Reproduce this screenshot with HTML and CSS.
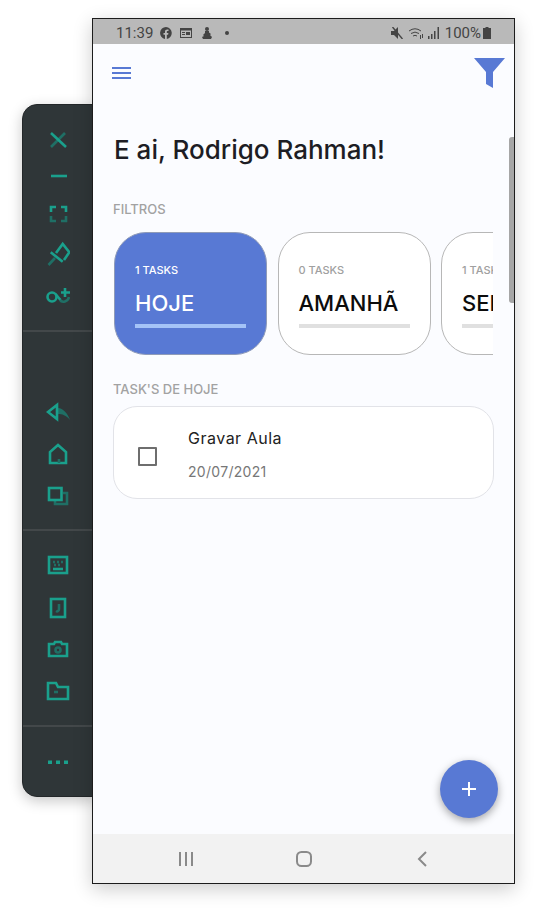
FILE: index.html
```html
<!doctype html>
<html lang="en">
	<head>
		<title>Tasks</title>
		<meta charset="utf-8" />
		<link rel="stylesheet" href="styles.css">
	</head>

	<body>

		<!-- emulator side toolbar -->
		<div class="toolbar">
			<div class="tool-group group-window">
				<svg class="tool" viewBox="0 0 24 24"><path class="dim" d="M19 5 5 19"/><path class="lit" d="M5 5l15 14"/></svg>
				<svg class="tool" viewBox="0 0 24 24"><path class="lit" d="M5 11h16"/></svg>
				<svg class="tool" viewBox="0 0 24 24"><path class="lit" d="M10 5H5v5M15 5h5v5"/><path class="dim" d="M5 14v5h5M15 19h5v-5"/></svg>
				<svg class="tool tool-wide" viewBox="0 0 24 24"><path class="dim" d="M2.5 22 9 15"/><path class="lit" d="M4.700 9.300l12 9.400M10 10l6.700-9 6.600 8.300L18 17"/></svg>
				<svg class="tool tool-wide" viewBox="0 0 24 24"><circle class="lit" cx="6" cy="13" r="4.500"/><path class="lit" d="M9.500 10l5 6M19 4v9M15 8.500h9"/><path class="dim" d="M14 16c2 3 8 2 9-3"/></svg>
			</div>
			<div class="tool-group group-nav">
				<svg class="tool" viewBox="0 0 24 24"><path class="dim-fill" d="M12 8c5 0 10 6 12 12-4-5-8-6-12-6z"/><path class="lit" d="M2 12l9-7v14z"/></svg>
				<svg class="tool" viewBox="0 0 24 24"><path class="lit" d="M4 21V10l8-7 8 7v11z"/><path class="dim" d="M13 17v4"/></svg>
				<svg class="tool" viewBox="0 0 24 24"><path class="dim" d="M17 9h4v11H9v-3"/><rect class="lit" x="3" y="4" width="12.500" height="12"/></svg>
			</div>
			<div class="tool-group group-device">
				<svg class="tool" viewBox="0 0 24 24"><rect class="lit" x="3" y="4" width="18" height="16"/><path class="lit" d="M7 16h10"/><path class="dim" stroke-dasharray="2 2" d="M7 9h10M8 12h8"/></svg>
				<svg class="tool" viewBox="0 0 24 24"><rect class="lit" x="5" y="4" width="14" height="18"/><path class="dim" d="M13 9v5a2 2 0 0 1-3 2"/></svg>
				<svg class="tool" viewBox="0 0 24 24"><path class="lit" d="M3 7h5l1-2h6l1 2h5v12H3z"/><circle class="dim" cx="12" cy="13" r="2.500"/></svg>
				<svg class="tool" viewBox="0 0 24 24"><path class="lit" d="M2 4h8l2 4h10v12H2z"/><path class="dim" d="M8 13h4"/></svg>
			</div>
			<div class="tool-group group-more">
				<svg class="tool" viewBox="0 0 24 24"><path class="dots" d="M2 10.500h4v3.500H2zM10 10.500h4v3.500h-4zM18 10.500h4v3.500h-4z"/></svg>
			</div>
		</div>

		<div class="phone">
			<div class="status-bar">
				<div class="status-left">
					<span class="clock">11:39</span>
					<svg class="status-icon" viewBox="0 0 12 12"><path d="M6 0a6 6 0 0 0-1 11.900V7.700H3.500V6H5V4.700C5 3.200 5.900 2.400 7.200 2.400l1.300.1V4h-.8c-.7 0-.9.400-.9 .9V6h1.600l-.3 1.700H6.800v4.200A6 6 0 0 0 6 0z"/></svg>
					<svg class="status-icon icon-news" viewBox="0 0 12 12"><path d="M0 1h12v10H0zm1 2.500V10h10V3.500zM2 5h3v1H2zm0 2h3v1H2zm4-2h4v3H6z" fill-rule="evenodd"/></svg>
					<svg class="status-icon icon-game" viewBox="0 0 12 12"><circle cx="6" cy="2" r="2"/><path d="M4 4h4v1.500L10 7l-1 1 2 2-1 2H2L1 10l2-1-1-1 2-2z"/></svg>
					<span class="status-dot"></span>
				</div>
				<div class="status-right">
					<svg class="status-icon icon-mute" viewBox="0 0 12 12"><path d="M0 4h3l4-4v12L3 8H0z"/><path class="mute-slash" d="M1.500 0l10 12"/></svg>
					<svg class="status-icon icon-wifi" viewBox="0 0 16 12"><path class="wifi" d="M1 4a10 10 0 0 1 12 0M3 6.500a7 7 0 0 1 8 0M5 9a3.500 3.500 0 0 1 4 0"/><path d="M12 8h1v4h-1zM14 7h1v4h-1z"/></svg>
					<svg class="status-icon icon-signal" viewBox="0 0 12 12"><path d="M0 9h1.500v3H0zM3 7h1.500v5H3zM6 4h1.500v8H6zM9.500 0H11v12H9.500z"/></svg>
					<span class="battery-text">100%</span>
					<svg class="status-icon icon-battery" viewBox="0 0 8 12"><path d="M2.500 0h3v1H8v11H0V1h2.500z"/></svg>
				</div>
			</div>

			<div class="screen">
				<div class="top-bar">
					<div class="menu-icon"><span></span><span></span><span></span></div>
					<svg class="funnel" viewBox="0 0 31 31"><path d="M0 0h31L19 14v16l-7-4V14z"/></svg>
				</div>

				<h1 class="greeting">E ai, Rodrigo Rahman!</h1>

				<p class="section-label">FILTROS</p>
				<div class="filters">
					<div class="filter-card active">
						<div class="filter-count">1 TASKS</div>
						<div class="filter-name">HOJE</div>
						<div class="filter-bar"></div>
					</div>
					<div class="filter-card">
						<div class="filter-count">0 TASKS</div>
						<div class="filter-name">AMANHÃ</div>
						<div class="filter-bar"></div>
					</div>
					<div class="filter-card">
						<div class="filter-count">1 TASKS</div>
						<div class="filter-name">SEMANA</div>
						<div class="filter-bar"></div>
					</div>
				</div>

				<p class="section-label label-tasks">TASK'S DE HOJE</p>
				<div class="task-card">
					<div class="checkbox"></div>
					<div class="task-text">
						<div class="task-title">Gravar Aula</div>
						<div class="task-date">20/07/2021</div>
					</div>
				</div>

				<div class="scroll-thumb"></div>
				<div class="fab">
					<svg viewBox="0 0 16 16"><path d="M8 1v14M1 8h14"/></svg>
				</div>
			</div>

			<div class="nav-bar">
				<svg class="nav-icon" viewBox="0 0 18 18"><path d="M3 2v14M9 2v14M15 2v14"/></svg>
				<svg class="nav-icon" viewBox="0 0 18 18"><rect x="3" y="2" width="14" height="14" rx="4.500"/></svg>
				<svg class="nav-icon" viewBox="0 0 18 18"><path d="M14 2 7 9l7 7"/></svg>
			</div>
		</div>

	</body>
</html>
```

FILE: styles.css
```css
body {
	margin: 0;
	background: #ffffff;
	overflow: hidden;
	font-family: "Inter", "Liberation Sans", sans-serif;
}

/* the two emulator windows sit freely on the desktop */
.toolbar {
	position: absolute;
	left: 22px;
	top: 104px;
	width: 75px;
	height: 693px;
	box-sizing: border-box;
	display: flex;
	flex-direction: column;
	background: #2f3638;
	border: 1px solid #232729;
	border-radius: 15px 0 0 15px;
	box-shadow: 0 4px 14px rgba(0, 0, 0, 0.22);
}

.tool-group {
	display: flex;
	flex-direction: column;
	align-items: flex-start;
	padding-left: 23px;
	border-bottom: 2px solid #43484a;
	box-sizing: border-box;
}

.group-window { height: 227px; padding-top: 17px; }
.group-nav { height: 199px; padding-top: 62px; gap: 6px; }
.group-device { height: 196px; padding-top: 16px; gap: 6px; }
.group-more { flex: 1; padding-top: 17px; border-bottom: none; }

.tool {
	width: 24px;
	height: 36px;
	flex: none;
	fill: none;
	stroke-width: 2.600;
}

.group-window .tool + .tool { margin-top: 1px; }
.group-window .tool + .tool-wide { margin-top: 5px; }

.lit { stroke: #1aa08c; fill: none; }
.dim { stroke: #1f6f65; fill: none; }
.dim-fill { fill: #1f6f65; stroke: none; }
.dots { fill: #1aa08c; stroke: none; }

.phone {
	position: absolute;
	left: 92px;
	top: 18px;
	width: 423px;
	height: 866px;
	box-sizing: border-box;
	display: flex;
	flex-direction: column;
	border: 1px solid #1c1c1c;
	background: #fbfcff;
	box-shadow: 0 5px 18px rgba(0, 0, 0, 0.2);
}

.status-bar {
	height: 25px;
	flex: none;
	display: flex;
	justify-content: space-between;
	align-items: center;
	padding: 3px 23px 0 23px;
	box-sizing: border-box;
	background: #b9b9b9;
	color: #444444;
	font-family: "Roboto", sans-serif;
	font-size: 15px;
}

.status-left,
.status-right {
	display: flex;
	align-items: center;
}

.status-icon {
	width: 12px;
	height: 12px;
	fill: #444444;
	flex: none;
}

.clock { margin-right: 7px; }
.icon-news { margin-left: 8px; }
.icon-game { margin-left: 9px; }
.status-dot {
	width: 4px;
	height: 4px;
	margin-left: 12px;
	border-radius: 50%;
	background: #444444;
}

.icon-wifi { width: 16px; margin-left: 5px; }
.icon-signal { margin-left: 4px; }
.battery-text { margin-left: 5px; }
.icon-battery { width: 8px; margin-left: 2px; }
.mute-slash { stroke: #444444; stroke-width: 1.4; }
.wifi { fill: none; stroke: #444444; stroke-width: 1; }

.screen {
	flex: 1;
	position: relative;
	padding: 0 20px;
}

.top-bar {
	display: flex;
	justify-content: space-between;
	align-items: flex-start;
	height: 63px;
	padding-top: 14px;
	margin-right: -11px;
}

.menu-icon {
	width: 19px;
	margin: 9px 0 0 -1px;
	display: flex;
	flex-direction: column;
	gap: 3px;
}

.menu-icon span {
	height: 2px;
	background: #5879d4;
}

.funnel {
	width: 31px;
	height: 31px;
	fill: #5879d4;
}

.greeting {
	margin: 12px 0 0 1px;
	height: 34px;
	font-size: 26px;
	line-height: 34px;
	font-weight: 500;
	color: #1d1d24;
}

.section-label {
	margin: 34px 0 0 0;
	font-size: 13px;
	line-height: 16px;
	font-weight: 500;
	color: #a2a2a2;
}

.filters {
	display: flex;
	gap: 10.500px;
	width: 379px;
	margin: 15px 0 0 1px;
	overflow: hidden;
}

.filter-card {
	width: 153px;
	height: 123px;
	flex: none;
	box-sizing: border-box;
	padding: 30px 20px 0 20px;
	border: 1px solid #b7b7b7;
	border-radius: 32px;
	background: #ffffff;
}

.filter-count {
	font-size: 11px;
	line-height: 14px;
	font-weight: 500;
	color: #a0a0a0;
}

.filter-name {
	margin-top: 12px;
	font-size: 22px;
	line-height: 28px;
	font-weight: 500;
	color: #0c0c0c;
}

.filter-bar {
	height: 4px;
	margin-top: 7px;
	background: #e0e0e0;
}

.filter-card.active {
	background: #5879d4;
	border-color: #8f9bb8;
}

.filter-card.active .filter-count,
.filter-card.active .filter-name {
	color: #ffffff;
}

.filter-card.active .filter-bar {
	background: #a4c3f7;
}

.label-tasks { margin-top: 26px; }

.task-card {
	display: flex;
	align-items: center;
	width: 381px;
	height: 93px;
	margin-top: 9px;
	box-sizing: border-box;
	padding-left: 24px;
	border: 1px solid #e2e3e8;
	border-radius: 24px;
	background: #ffffff;
}

.checkbox {
	width: 19px;
	height: 19px;
	flex: none;
	margin-top: 7px;
	box-sizing: border-box;
	border: 2px solid #6e6e6e;
	border-radius: 1px;
}

.task-text {
	margin-left: 31px;
	margin-top: 5px;
}

.task-title {
	font-size: 16px;
	line-height: 20px;
	letter-spacing: 0.5px;
	color: #222222;
}

.task-date {
	margin-top: 14px;
	font-size: 14px;
	line-height: 20px;
	letter-spacing: 0.3px;
	color: #777777;
}

.scroll-thumb {
	position: absolute;
	right: 0;
	top: 93px;
	width: 5px;
	height: 166px;
	border-radius: 3px 0 0 3px;
	background: #a6a6a6;
}

.fab {
	position: absolute;
	right: 16px;
	bottom: 16px;
	width: 58px;
	height: 58px;
	display: flex;
	align-items: center;
	justify-content: center;
	border-radius: 50%;
	background: #5879d4;
	box-shadow: 0 3px 8px rgba(0, 0, 0, 0.35);
}

.fab svg {
	width: 16px;
	height: 16px;
	fill: none;
	stroke: #ffffff;
	stroke-width: 2;
}

.nav-bar {
	height: 49px;
	flex: none;
	display: grid;
	grid-template-columns: repeat(3, 1fr);
	justify-items: center;
	align-items: center;
	padding: 0 34px;
	background: #f2f2f2;
}

.nav-icon {
	width: 18px;
	height: 18px;
	fill: none;
	stroke: #8a8a8a;
	stroke-width: 2;
}
```
